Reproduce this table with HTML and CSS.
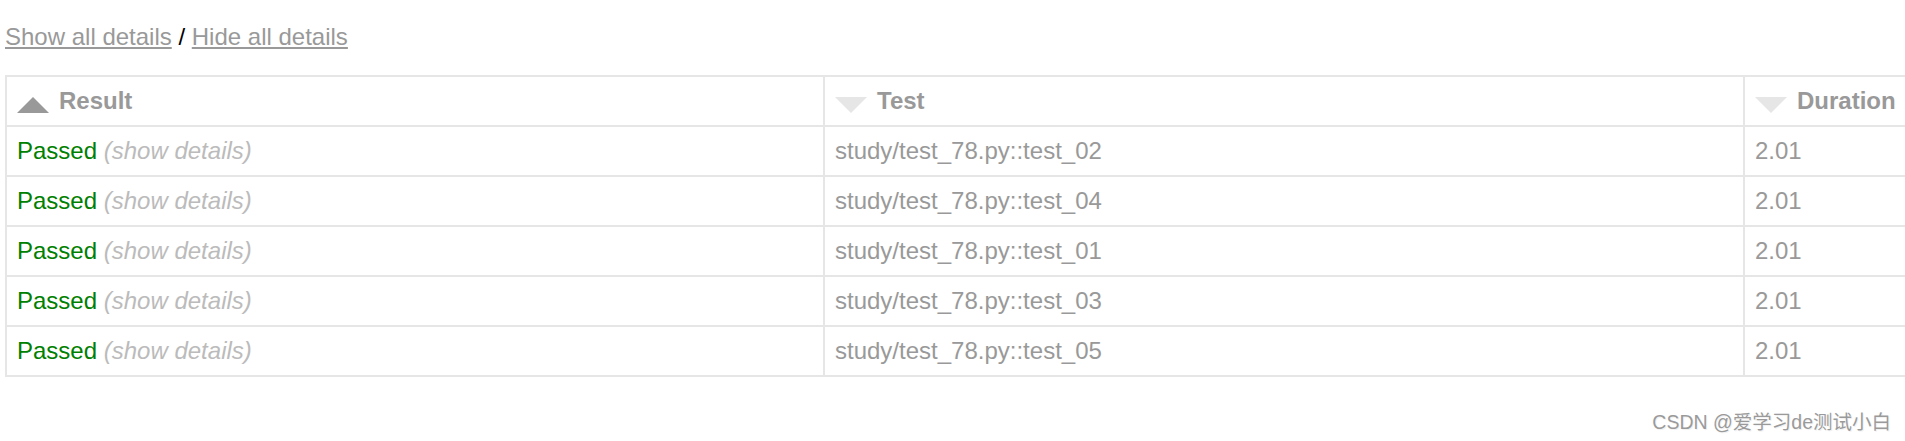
FILE: index.html
```html
<!DOCTYPE html>
<html>
<head>
<meta charset="utf-8">
<title>Report</title>
<link rel="stylesheet" href="styles.css">
</head>
<body>
<p class="toggles"><a href="#" class="link">Show all details</a>&nbsp;/&nbsp;<a href="#" class="link">Hide all details</a></p>
<table class="results">
  <colgroup>
    <col class="c-result">
    <col class="c-test">
    <col class="c-duration">
    <col class="c-links">
  </colgroup>
  <thead>
    <tr>
      <th class="sortable asc active"><div class="sort-icon"></div>Result</th>
      <th class="sortable inactive"><div class="sort-icon"></div>Test</th>
      <th class="sortable inactive"><div class="sort-icon"></div>Duration</th>
      <th>Links</th>
    </tr>
  </thead>
  <tbody>
    <tr><td><span class="passed">Passed</span><span class="expander"> (show details)</span></td><td>study/test_78.py::test_02</td><td>2.01</td><td></td></tr>
    <tr><td><span class="passed">Passed</span><span class="expander"> (show details)</span></td><td>study/test_78.py::test_04</td><td>2.01</td><td></td></tr>
    <tr><td><span class="passed">Passed</span><span class="expander"> (show details)</span></td><td>study/test_78.py::test_01</td><td>2.01</td><td></td></tr>
    <tr><td><span class="passed">Passed</span><span class="expander"> (show details)</span></td><td>study/test_78.py::test_03</td><td>2.01</td><td></td></tr>
    <tr><td><span class="passed">Passed</span><span class="expander"> (show details)</span></td><td>study/test_78.py::test_05</td><td>2.01</td><td></td></tr>
  </tbody>
</table>
<div class="watermark">CSDN @爱学习de测试小白</div>
</body>
</html>
```

FILE: styles.css
```css
html {
  overflow: hidden;
}
body {
  margin: 0;
  padding: 0 0 0 5px;
  font-family: "Liberation Sans", Helvetica, Arial, sans-serif;
  font-size: 24px;
  color: #000;
  background: #fff;
  position: relative;
  height: 441px;
  width: 1900px;
}
.toggles {
  margin: 23px 0 24px 0;
  white-space: nowrap;
}
.link {
  color: #999;
  text-decoration: underline;
}
.results {
  border-collapse: collapse;
  border: 2px solid #e6e6e6;
  color: #999;
  font-size: 24px;
  table-layout: fixed;
  width: 2238px;
}
.c-result { width: 818px; }
.c-test { width: 920px; }
.c-duration { width: 250px; }
.c-links { width: 250px; }
.results th,
.results td {
  padding: 10px;
  border: 2px solid #e6e6e6;
  text-align: left;
  white-space: nowrap;
}
.results th {
  font-weight: bold;
}
.sort-icon {
  float: left;
  width: 0;
  height: 0;
  margin-top: 10px;
  margin-right: 10px;
  border-left: 16px solid transparent;
  border-right: 16px solid transparent;
}
.inactive .sort-icon {
  border-top: 16px solid #e6e6e6;
}
.asc.active .sort-icon {
  border-bottom: 16px solid #999;
}
.passed {
  color: green;
}
.expander {
  color: #bbb;
  font-style: italic;
}
.watermark {
  position: absolute;
  top: 406px;
  right: 14px;
  font-family: "Liberation Sans", "Noto Sans CJK SC", sans-serif;
  font-size: 19.5px;
  color: #9a9a9a;
  text-shadow: 0 0 1px #fff, 1px 1px 1px #eee;
  white-space: nowrap;
}
```
